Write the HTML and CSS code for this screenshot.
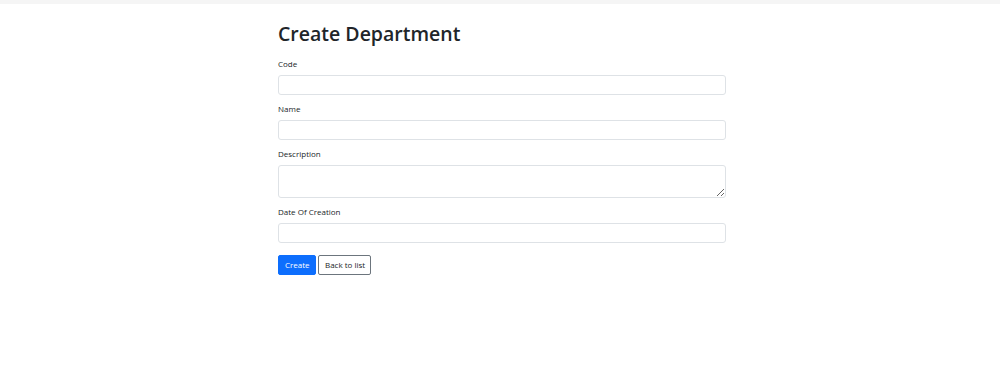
FILE: index.html
```html
<!DOCTYPE html>
<html>
<head>
<meta charset="utf-8">
<link rel="stylesheet" href="styles.css">
</head>
<body>
<div class="topbar"></div>
<main class="container">
  <h1 class="title">Create Department</h1>
  <form class="form">
    <div class="field">
      <label class="label">Code</label>
      <input class="input" type="text">
    </div>
    <div class="field">
      <label class="label">Name</label>
      <input class="input" type="text">
    </div>
    <div class="field">
      <label class="label">Description</label>
      <textarea class="input textarea"></textarea>
    </div>
    <div class="field">
      <label class="label">Date Of Creation</label>
      <input class="input" type="text">
    </div>
    <div class="actions">
      <button type="button" class="btn btn-primary">Create</button>
      <button type="button" class="btn btn-outline">Back to list</button>
    </div>
  </form>
</main>
</body>
</html>
```

FILE: styles.css
```css
* { box-sizing: border-box; }
html, body { margin: 0; padding: 0; background: #fff; }
body {
  font-family: "Open Sans", "Noto Sans", sans-serif;
  color: #212529;
}
.topbar {
  height: 4px;
  background: #f5f5f5;
}
.container {
  width: 448px;
  margin: 0 auto;
  padding-top: 16px;
  transform: translateX(2px);
}
.title {
  margin: 0 0 10px 0;
  font-size: 19.5px;
  font-weight: 600;
  line-height: 28px;
  color: #212529;
}
.form {
  display: flex;
  flex-direction: column;
}
.field {
  display: flex;
  flex-direction: column;
  margin-bottom: 8px;
}
.label {
  font-size: 8px;
  line-height: 12px;
  margin-bottom: 5px;
  color: #212529;
}
.input {
  display: block;
  width: 100%;
  height: 20px;
  border: 1px solid #dee2e6;
  border-radius: 3px;
  background: #fff;
  font: inherit;
  padding: 2px 6px;
}
.textarea {
  height: 33px;
  resize: vertical;
}
.actions {
  display: flex;
  gap: 2px;
  margin-top: 4px;
}
.btn {
  height: 20px;
  font-family: "Open Sans", "Noto Sans", sans-serif;
  font-size: 8px;
  line-height: 18px;
  white-space: nowrap;
  border-radius: 2px;
  padding: 0 6px;
  cursor: pointer;
}
.btn-primary {
  background: #0d6efd;
  border: 1px solid #0d6efd;
  color: #fff;
  width: 38px;
}
.btn-outline {
  background: #fff;
  border: 1px solid #6c757d;
  color: #212529;
  width: 53px;
}
```
